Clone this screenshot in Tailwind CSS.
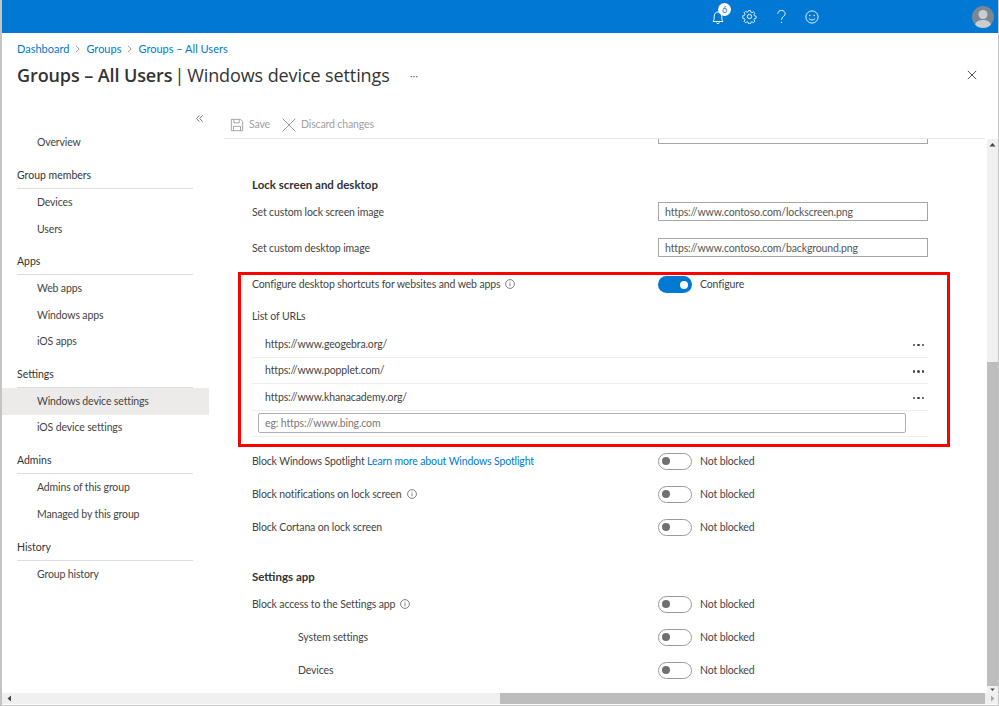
<!DOCTYPE html>
<html lang="en">
<head>
  <meta charset="UTF-8">
  <title>Groups – All Users | Windows device settings</title>
  <script src="https://cdn.jsdelivr.net/npm/@tailwindcss/browser@4"></script>
</head>
<body class="bg-white text-[#444] font-['Lato',sans-serif] text-[10.5px] tracking-[-0.13px] overflow-hidden">
<div class="relative h-[706px] w-[999px] flex flex-col border-l-2 border-r border-b border-[#c4c4c4] overflow-hidden">

  <!-- Top bar -->
  <header class="h-[33px] shrink-0 bg-[#0078d4] flex items-center text-white">
    <div class="relative ml-[708px] w-[16px] h-[16px] mt-[1px]">
      <svg viewBox="0 0 16 16" class="w-[16px] h-[16px]" fill="none" stroke="white" stroke-width="1"><path d="M3 12.500c1-1.200 1.200-2.500 1.200-5C4.200 4.500 5.800 3 8 3s3.800 1.500 3.800 4.500c0 2.500.2 3.800 1.200 5z"/><path d="M6.500 13.500a1.600 1.600 0 0 0 3 0"/></svg>
      <span class="absolute left-[8px] top-[-6px] w-[13px] h-[13px] rounded-full bg-white text-[#0078d4] text-[9px] leading-[13px] text-center">6</span>
    </div>
    <svg viewBox="0 0 16 16" class="ml-[16px] w-[15px] h-[15px]" fill="none" stroke="white" stroke-width="1"><path d="M6.800 1h2.400l.4 2 1.300.6 1.800-1.100 1.700 1.700-1.100 1.800.6 1.300 2 .4v2.400l-2 .4-.6 1.300 1.100 1.800-1.700 1.700-1.800-1.100-1.300.6-.4 2H6.800l-.4-2-1.300-.6-1.800 1.100-1.700-1.700 1.100-1.800-.6-1.300-2-.4V7.100l2-.4.6-1.300-1.100-1.800 1.700-1.700 1.800 1.100 1.300-.6z" transform="translate(.8 .8) scale(.9)"/><circle cx="8" cy="8" r="2.300"/></svg>
    <svg viewBox="0 0 12 16" class="ml-[19px] w-[11px] h-[15px]" fill="none" stroke="white" stroke-width="1"><path d="M2 5c0-2.200 1.800-3.600 4-3.600S10 2.800 10 5c0 3-4 3-4 6.500"/><circle cx="6" cy="14.300" r=".7" fill="white" stroke="none"/></svg>
    <svg viewBox="0 0 16 16" class="ml-[18px] w-[14px] h-[14px]" fill="none" stroke="white" stroke-width="1"><circle cx="8" cy="8" r="7"/><circle cx="5.500" cy="6.300" r=".8" fill="white" stroke="none"/><circle cx="10.500" cy="6.300" r=".8" fill="white" stroke="none"/><path d="M4.500 9.800c1.800 2.200 5.200 2.200 7 0"/></svg>
    <div class="ml-auto mr-[4px] w-[22px] h-[22px] rounded-full bg-[#7a8794] overflow-hidden">
      <svg viewBox="0 0 22 22" class="w-[22px] h-[22px]" fill="#c9ccd0"><circle cx="11" cy="8.500" r="4.500"/><path d="M2.500 22c0-5.500 3-8 8.500-8s8.500 2.500 8.500 8z"/></svg>
    </div>
  </header>

  <!-- Page header -->
  <div class="h-[71px] shrink-0 pl-[15px] pr-[22px] relative">
    <nav class="flex items-center gap-[5.500px] pt-[8px] text-[#0078d4] text-[11px] tracking-normal leading-[15px]">
      <span>Dashboard</span>
      <svg viewBox="0 0 8 10" class="w-[6px] h-[8px]" fill="none" stroke="#777"><path d="M1.500 1l4 4-4 4"/></svg>
      <span>Groups</span>
      <svg viewBox="0 0 8 10" class="w-[6px] h-[8px]" fill="none" stroke="#777"><path d="M1.500 1l4 4-4 4"/></svg>
      <span>Groups – All Users</span>
    </nav>
    <div class="flex items-center mt-[6px] font-['Open_Sans',sans-serif] text-[18px] tracking-[-0.1px] leading-[26px] text-[#333]">
      <span class="font-semibold">Groups – All Users</span>
      <span class="ml-[2px] font-normal">|</span>
      <span class="ml-[3px] font-normal">Windows device settings</span>
      <span class="ml-[20px] text-[11px] text-[#555] leading-none">···</span>
    </div>
    <svg viewBox="0 0 12 12" class="absolute right-[21px] top-[37px] w-[10px] h-[10px]" stroke="#444" stroke-width="1.100"><path d="M1 1l10 10M11 1L1 11"/></svg>
  </div>

  <div class="flex-1 flex min-h-0">
    <!-- Sidebar -->
    <aside class="w-[207px] shrink-0 relative pt-[25.500px]">
      <svg viewBox="0 0 7 7" class="absolute left-[194px] top-[11px] w-[7px] h-[7px]" fill="none" stroke="#666" stroke-width=".9"><path d="M3.300.5L.5 3.500l2.800 3M6.500.5L3.700 3.500l2.800 3"/></svg>
      <a class="block h-[26.500px] leading-[25px] pl-[35px]">Overview</a>

      <div class="h-[33px] mx-[15px] mr-[16px] pt-[11px] leading-[16px] tracking-normal border-b border-[#ddd] text-[#333]">Group members</div>
      <a class="block h-[26.500px] leading-[26.500px] pl-[35px]">Devices</a>
      <a class="block h-[26.500px] leading-[26.500px] pl-[35px]">Users</a>

      <div class="h-[33px] mx-[15px] mr-[16px] pt-[11px] leading-[16px] tracking-normal border-b border-[#ddd] text-[#333]">Apps</div>
      <a class="block h-[26.500px] leading-[26.500px] pl-[35px]">Web apps</a>
      <a class="block h-[26.500px] leading-[26.500px] pl-[35px]">Windows apps</a>
      <a class="block h-[26.500px] leading-[26.500px] pl-[35px]">iOS apps</a>

      <div class="h-[33.500px] mx-[15px] mr-[16px] pt-[11px] leading-[16px] tracking-normal border-b border-[#ddd] text-[#333]">Settings</div>
      <a class="block h-[26.500px] leading-[26.500px] pl-[35px] bg-[#edebe9]">Windows device settings</a>
      <a class="block h-[26.500px] leading-[25px] pl-[35px]">iOS device settings</a>

      <div class="h-[33px] mx-[15px] mr-[16px] pt-[11px] leading-[16px] tracking-normal border-b border-[#ddd] text-[#333]">Admins</div>
      <a class="block h-[26.500px] leading-[26.500px] pl-[35px]">Admins of this group</a>
      <a class="block h-[26.500px] leading-[26.500px] pl-[35px]">Managed by this group</a>

      <div class="h-[33.500px] mx-[15px] mr-[16px] pt-[12px] leading-[16px] tracking-normal border-b border-[#ddd] text-[#333]">History</div>
      <a class="block h-[26.500px] leading-[26.500px] pl-[35px]">Group history</a>
    </aside>

    <!-- Main -->
    <main class="flex-1 min-w-0 flex flex-col pl-[15px]">
      <div class="h-[35px] shrink-0 flex items-center pl-[6px] pt-[7px] mr-[13px] border-b border-[#e5e5e5] text-[#a0a0a0]">
        <svg viewBox="0 0 16 16" class="w-[14px] h-[14px]" fill="none" stroke="#9a9a9a"><path d="M1.500 1.500h10.500l2.500 2.500v10.500h-13z"/><path d="M4.500 1.500v4h6v-4M4 14.500v-5h8v5"/></svg>
        <span class="ml-[5px]">Save</span>
        <svg viewBox="0 0 14 14" class="ml-[12px] w-[14px] h-[14px]" stroke="#9a9a9a"><path d="M.5.500l13 13M13.500.500l-13 13"/></svg>
        <span class="ml-[5px]">Discard changes</span>
      </div>

      <div class="flex-1 min-h-0 overflow-hidden pl-[28px] w-[761px]">
        <div class="h-[5px] ml-[406px] w-[270px] border border-t-0 border-[#a6a6a6]"></div>

        <h3 class="mt-[33px] h-[16px] leading-[16px] text-[11.500px] tracking-normal font-bold text-[#333]">Lock screen and desktop</h3>
        <div class="mt-[9px] h-[36px] flex items-start">
          <label class="w-[406px] leading-[20px]">Set custom lock screen image</label>
          <input class="w-[270px] h-[19px] px-[6px] border border-[#a6a6a6] outline-none text-[#555]" value="https://www.contoso.com/lockscreen.png">
        </div>
        <div class="h-[36px] flex items-start">
          <label class="w-[406px] leading-[20px]">Set custom desktop image</label>
          <input class="w-[270px] h-[19px] px-[6px] border border-[#a6a6a6] outline-none text-[#555]" value="https://www.contoso.com/background.png">
        </div>

        <div class="h-[32px] flex items-start">
          <label class="w-[406px] leading-[20px] flex items-center gap-[5px]">Configure desktop shortcuts for websites and web apps
            <svg viewBox="0 0 12 12" class="w-[10px] h-[10px]" fill="none" stroke="#666"><circle cx="6" cy="6" r="5.300"/><path d="M6 5.300v3.500M6 3v1.200"/></svg>
          </label>
          <span class="w-[34px] h-[17px] mt-[2px] rounded-full bg-[#0078d4] flex items-center justify-end pr-[4px]"><span class="w-[8px] h-[8px] rounded-full bg-white"></span></span>
          <span class="ml-[8px] leading-[20px]">Configure</span>
        </div>
        <div class="h-[20px] leading-[20px]">List of URLs</div>

        <div class="mt-[5px] w-[676px]">
          <div class="h-[26.500px] pt-[2px] pl-[13px] pr-[4px] flex items-center justify-between border-b border-[#efefef]"><span>https://www.geogebra.org/</span><span class="flex gap-[2px]"><i class="w-[2.500px] h-[2.500px] rounded-full bg-[#444]"></i><i class="w-[2.500px] h-[2.500px] rounded-full bg-[#444]"></i><i class="w-[2.500px] h-[2.500px] rounded-full bg-[#444]"></i></span></div>
          <div class="h-[26.500px] pt-[2px] pl-[13px] pr-[4px] flex items-center justify-between border-b border-[#efefef]"><span>https://www.popplet.com/</span><span class="flex gap-[2px]"><i class="w-[2.500px] h-[2.500px] rounded-full bg-[#444]"></i><i class="w-[2.500px] h-[2.500px] rounded-full bg-[#444]"></i><i class="w-[2.500px] h-[2.500px] rounded-full bg-[#444]"></i></span></div>
          <div class="h-[26.500px] pt-[2px] pl-[13px] pr-[4px] flex items-center justify-between border-b border-[#efefef]"><span>https://www.khanacademy.org/</span><span class="flex gap-[2px]"><i class="w-[2.500px] h-[2.500px] rounded-full bg-[#444]"></i><i class="w-[2.500px] h-[2.500px] rounded-full bg-[#444]"></i><i class="w-[2.500px] h-[2.500px] rounded-full bg-[#444]"></i></span></div>
          <div class="h-[26px] pl-[6px] pt-[2px] border-b border-[#efefef]">
            <input class="w-[648px] h-[20px] px-[6px] border border-[#b0b0b0] rounded-[2px] outline-none placeholder:text-[#777]" placeholder="eg: https://www.bing.com">
          </div>
        </div>

        <div class="mt-[14px] h-[33px] flex items-start">
          <label class="w-[406px] leading-[20px]">Block Windows Spotlight <a class="text-[#0078d4]">Learn more about Windows Spotlight</a></label>
          <span class="w-[34px] h-[17px] mt-[2px] rounded-full border border-[#999] flex items-center pl-[3px]"><span class="w-[8px] h-[8px] rounded-full bg-[#707070]"></span></span>
          <span class="ml-[8px] leading-[20px]">Not blocked</span>
        </div>
        <div class="h-[33px] flex items-start">
          <label class="w-[406px] leading-[20px] flex items-center gap-[5px]">Block notifications on lock screen
            <svg viewBox="0 0 12 12" class="w-[10px] h-[10px]" fill="none" stroke="#666"><circle cx="6" cy="6" r="5.300"/><path d="M6 5.300v3.500M6 3v1.200"/></svg>
          </label>
          <span class="w-[34px] h-[17px] mt-[2px] rounded-full border border-[#999] flex items-center pl-[3px]"><span class="w-[8px] h-[8px] rounded-full bg-[#707070]"></span></span>
          <span class="ml-[8px] leading-[20px]">Not blocked</span>
        </div>
        <div class="h-[33px] flex items-start">
          <label class="w-[406px] leading-[20px]">Block Cortana on lock screen</label>
          <span class="w-[34px] h-[17px] mt-[2px] rounded-full border border-[#999] flex items-center pl-[3px]"><span class="w-[8px] h-[8px] rounded-full bg-[#707070]"></span></span>
          <span class="ml-[8px] leading-[20px]">Not blocked</span>
        </div>

        <h3 class="mt-[9px] pt-[10px] h-[26px] leading-[16px] text-[11.500px] tracking-normal font-bold text-[#333]">Settings app</h3>
        <div class="mt-[9px] h-[33px] flex items-start">
          <label class="w-[406px] leading-[20px] flex items-center gap-[5px]">Block access to the Settings app
            <svg viewBox="0 0 12 12" class="w-[10px] h-[10px]" fill="none" stroke="#666"><circle cx="6" cy="6" r="5.300"/><path d="M6 5.300v3.500M6 3v1.200"/></svg>
          </label>
          <span class="w-[34px] h-[17px] mt-[2px] rounded-full border border-[#999] flex items-center pl-[3px]"><span class="w-[8px] h-[8px] rounded-full bg-[#707070]"></span></span>
          <span class="ml-[8px] leading-[20px]">Not blocked</span>
        </div>
        <div class="h-[33px] flex items-start">
          <label class="w-[406px] pl-[46px] leading-[20px]">System settings</label>
          <span class="w-[34px] h-[17px] mt-[2px] rounded-full border border-[#999] flex items-center pl-[3px]"><span class="w-[8px] h-[8px] rounded-full bg-[#707070]"></span></span>
          <span class="ml-[8px] leading-[20px]">Not blocked</span>
        </div>
        <div class="h-[33px] flex items-start">
          <label class="w-[406px] pl-[46px] leading-[20px]">Devices</label>
          <span class="w-[34px] h-[17px] mt-[2px] rounded-full border border-[#999] flex items-center pl-[3px]"><span class="w-[8px] h-[8px] rounded-full bg-[#707070]"></span></span>
          <span class="ml-[8px] leading-[20px]">Not blocked</span>
        </div>
      </div>
    </main>
  </div>

  <!-- Red highlight drawn over the screenshot -->
  <div class="absolute left-[236px] top-[272px] w-[712px] h-[175px] border-[3px] border-[#f00]"></div>

  <!-- Vertical scrollbar -->
  <div class="absolute left-[985px] top-[139px] w-[11px] h-[555px] bg-[#f0f0f0] flex flex-col">
    <svg viewBox="0 0 11 11" class="w-[11px] h-[11px] shrink-0" fill="#444"><path d="M2.500 7.500L5.500 4l3 3.500z"/></svg>
    <div class="mt-[212px] h-[324px] bg-[#bdbdbd]"></div>
    <svg viewBox="0 0 11 11" class="w-[11px] h-[8px] shrink-0" fill="#444"><path d="M2.500 3.500L5.500 7l3-3.500z"/></svg>
  </div>
  <!-- Horizontal scrollbar -->
  <div class="absolute left-0 top-[693px] w-[996px] h-[11px] bg-[#f0f0f0] flex items-center">
    <svg viewBox="0 0 11 11" class="ml-[2px] w-[11px] h-[11px] shrink-0" fill="#444"><path d="M7 2.500L3.500 5.500 7 8.500z"/></svg>
    <div class="ml-[485px] w-[485px] h-[11px] bg-[#bdbdbd]"></div>
    <svg viewBox="0 0 11 11" class="ml-[2px] w-[11px] h-[11px] shrink-0" fill="#aaa"><path d="M4 2.500L7.500 5.500 4 8.500z"/></svg>
  </div>
</div>
</body>
</html>
